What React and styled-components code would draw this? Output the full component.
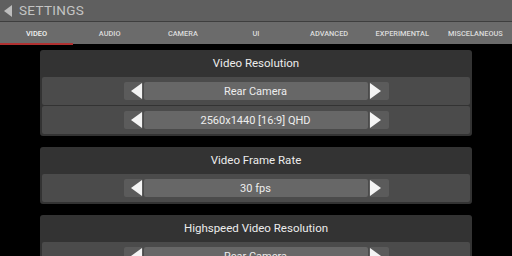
import React from 'react';
import styled, { createGlobalStyle } from 'styled-components';

const GlobalStyle = createGlobalStyle`
  html, body {
    margin: 0;
    padding: 0;
    background: #000;
    font-family: Roboto, "Liberation Sans", sans-serif;
  }
`;

const Page = styled.div`
  width: 512px;
  height: 256px;
  overflow: hidden;
  background: #000;
`;

const TopBar = styled.div`
  height: 21px;
  background: #5f5f5f;
  border-bottom: 1px solid #3e3e3e;
  display: flex;
  align-items: center;
  padding-left: 4px;
  gap: 7px;
`;

const Title = styled.div`
  color: #c4c4c4;
  font-size: 13.5px;
  letter-spacing: 0.3px;
  line-height: 1;
`;

const Tabs = styled.div`
  height: 22px;
  background: #6b6b6b;
  display: grid;
  grid-template-columns: repeat(7, 1fr);
`;

const Tab = styled.div`
  position: relative;
  display: flex;
  align-items: center;
  justify-content: center;
  color: ${p => (p.active ? '#f2f2f2' : '#dcdcdc')};
  font-size: 7.4px;
  font-weight: 500;
  &::after {
    content: '';
    display: ${p => (p.active ? 'block' : 'none')};
    position: absolute;
    left: 0;
    right: 0;
    bottom: -1px;
    height: 2px;
    background: #b03030;
  }
`;

const Content = styled.div`
  padding: 6px 40px 0;
  display: flex;
  flex-direction: column;
  gap: 11px;
`;

const Panel = styled.div`
  background: #333;
  border-radius: 3px;
  padding: 0 2px 2px;
  display: flex;
  flex-direction: column;
  gap: 1px;
`;

const PanelTitle = styled.div`
  height: 26px;
  display: flex;
  align-items: center;
  justify-content: center;
  color: #ececec;
  font-size: 11.5px;
`;

const Row = styled.div`
  height: 28px;
  background: #4b4b4b;
  border-radius: 2px;
  display: flex;
  align-items: center;
  justify-content: center;
`;

const ArrowBtn = styled.div`
  width: ${p => (p.right ? 20 : 19)}px;
  height: 18px;
  background: #5b5b5b;
  border-radius: 2px;
  display: flex;
  align-items: center;
  justify-content: ${p => (p.right ? 'flex-start' : 'flex-end')};
  padding: ${p => (p.right ? '0 0 0 1px' : '0 1px 0 0')};
  box-sizing: border-box;
`;

const Value = styled.div`
  width: 224px;
  height: 18px;
  margin: 0 1px;
  background: #676767;
  border-radius: 2px;
  display: flex;
  align-items: center;
  justify-content: center;
  color: #ededed;
  font-size: 11px;
`;

const Tri = ({ dir, w = 11, h = 16, color = '#f4f4f4' }) => (
  <svg width={w} height={h} viewBox={`0 0 ${w} ${h}`}>
    {dir === 'left'
      ? <polygon points={`0,${h / 2} ${w},0 ${w},${h}`} fill={color} />
      : <polygon points={`0,0 ${w},${h / 2} 0,${h}`} fill={color} />}
  </svg>
);

const Spinner = ({ value }) => (
  <Row>
    <ArrowBtn><Tri dir="left" /></ArrowBtn>
    <Value>{value}</Value>
    <ArrowBtn right><Tri dir="right" /></ArrowBtn>
  </Row>
);

const tabs = ['VIDEO', 'AUDIO', 'CAMERA', 'UI', 'ADVANCED', 'EXPERIMENTAL', 'MISCELANEOUS'];

const sections = [
  { title: 'Video Resolution', values: ['Rear Camera', '2560x1440 [16:9] QHD'] },
  { title: 'Video Frame Rate', values: ['30 fps'] },
  { title: 'Highspeed Video Resolution', values: ['Rear Camera', '1280x720 [16:9] HD'] },
];

export default function App() {
  return (
    <Page>
      <GlobalStyle />
      <TopBar>
        <Tri dir="left" w={8} h={12} color="#bdbdbd" />
        <Title>SETTINGS</Title>
      </TopBar>
      <Tabs>
        {tabs.map((t, i) => (
          <Tab key={t} active={i === 0}>{t}</Tab>
        ))}
      </Tabs>
      <Content>
        {sections.map(s => (
          <Panel key={s.title}>
            <PanelTitle>{s.title}</PanelTitle>
            {s.values.map(v => <Spinner key={v} value={v} />)}
          </Panel>
        ))}
      </Content>
    </Page>
  );
}
